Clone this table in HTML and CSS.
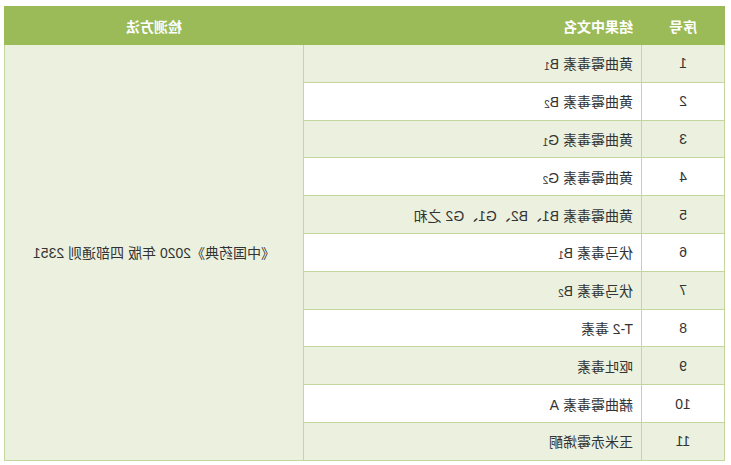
FILE: index.html
```html
<!DOCTYPE html>
<html lang="zh">
<head>
<meta charset="utf-8">
<title>检测方法</title>
<link rel="stylesheet" href="styles.css">
</head>
<body>
<div class="wrap">
<table class="tbl">
  <colgroup>
    <col class="c1"><col class="c2"><col class="c3">
  </colgroup>
  <thead>
    <tr><th>序号</th><th>结果中文名</th><th>检测方法</th></tr>
  </thead>
  <tbody>
    <tr class="alt"><td class="num">1</td><td class="name">黄曲霉毒素 B<sub>1</sub></td><td class="method" rowspan="11">《中国药典》2020 年版 四部通则 2351</td></tr>
    <tr><td class="num">2</td><td class="name">黄曲霉毒素 B<sub>2</sub></td></tr>
    <tr class="alt"><td class="num">3</td><td class="name">黄曲霉毒素 G<sub>1</sub></td></tr>
    <tr><td class="num">4</td><td class="name">黄曲霉毒素 G<sub>2</sub></td></tr>
    <tr class="alt"><td class="num">5</td><td class="name">黄曲霉毒素 B1、B2、G1、G2 之和</td></tr>
    <tr><td class="num">6</td><td class="name">伏马毒素 B<sub>1</sub></td></tr>
    <tr class="alt"><td class="num">7</td><td class="name">伏马毒素 B<sub>2</sub></td></tr>
    <tr><td class="num">8</td><td class="name">T-2 毒素</td></tr>
    <tr class="alt"><td class="num">9</td><td class="name">呕吐毒素</td></tr>
    <tr><td class="num">10</td><td class="name">赭曲霉毒素 A</td></tr>
    <tr class="alt"><td class="num">11</td><td class="name">玉米赤霉烯酮</td></tr>
  </tbody>
</table>
</div>
</body>
</html>
```

FILE: styles.css
```css
html, body {
  margin: 0;
  padding: 0;
  background: #ffffff;
}
.wrap {
  padding: 6px 5px 0 6px;
  transform: scaleX(-1);
  transform-origin: 365.5px 0;
  width: 720px;
}
.tbl {
  width: 720px;
  border-collapse: collapse;
  table-layout: fixed;
  font-family: "Liberation Sans", "Noto Sans CJK SC", sans-serif;
  font-size: 14px;
  color: #333333;
}
.c1 { width: 83px; }
.c2 { width: 338px; }
.c3 { width: 299px; }
.tbl th {
  background: #9bbb59;
  color: #ffffff;
  font-weight: bold;
  height: 38px;
  padding: 0;
  text-align: center;
  border: 1px solid #9bbb59;
  box-sizing: border-box;
}
.tbl th:nth-child(2) {
  text-align: left;
  padding-left: 8px;
}
.tbl td {
  height: 36.8px;
  padding: 0;
  border: 1px solid #c3d69b;
  background: #ffffff;
}
.tbl tr.alt td {
  background: #ebf1de;
}
.tbl td.method {
  background: #ebf1de;
  text-align: center;
}
.num {
  text-align: center;
}
.name {
  text-align: left;
  padding-left: 8px !important;
}
sub {
  font-size: 10px;
  vertical-align: -1px;
  line-height: 0;
}
```
